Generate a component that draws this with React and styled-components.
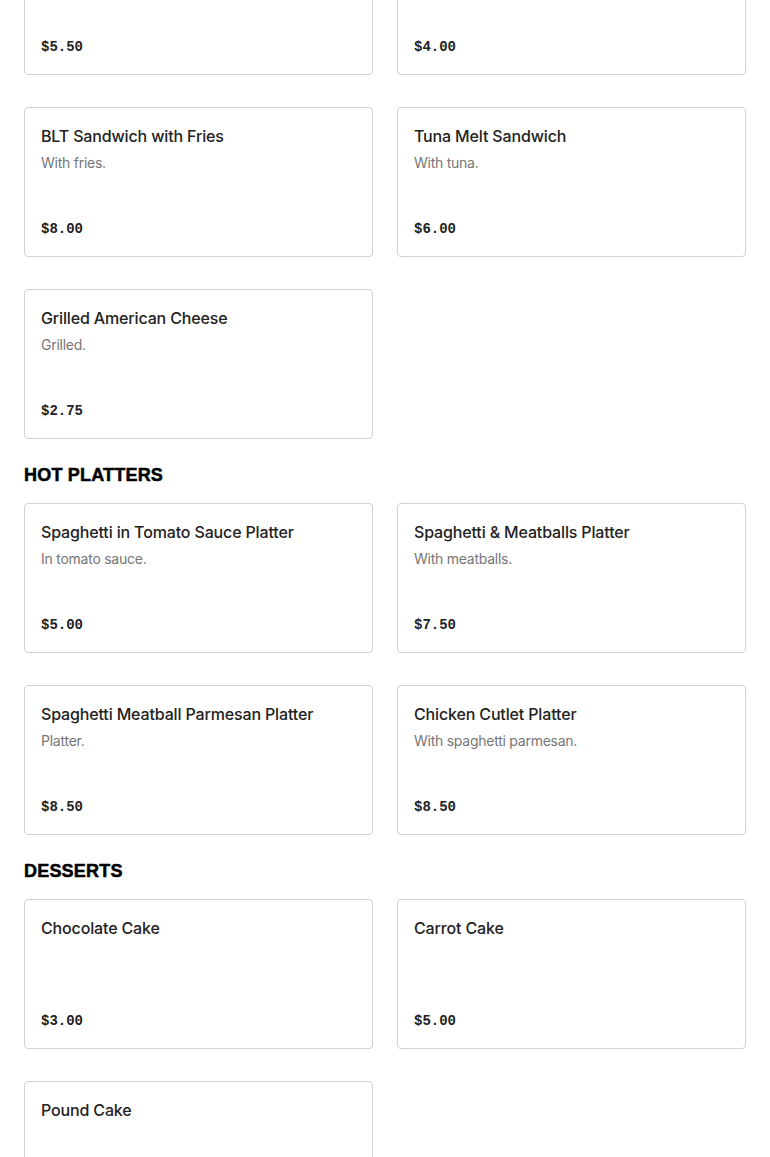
import React from "react";
import styled, { createGlobalStyle } from "styled-components";

const Global = createGlobalStyle`
  html, body { margin: 0; padding: 0; background: #fff; }
  body { font-family: Inter, "Liberation Sans", sans-serif; color: #222; }
`;

const Page = styled.main`
  padding: 0 24px;
  margin-top: -75px;
`;

const Section = styled.section`
  display: flex;
  flex-direction: column;
`;

const Heading = styled.h2`
  margin: 24px 0 16px;
  font-family: "Liberation Sans", Arial, sans-serif;
  font-weight: 900;
  font-size: 18px;
  line-height: 24px;
  letter-spacing: 0.2px;
  -webkit-text-stroke: 0.5px #000;
  color: #000;
  text-transform: uppercase;
`;

const Grid = styled.div`
  display: grid;
  grid-template-columns: 1fr 1fr;
  column-gap: 24px;
  row-gap: 32px;
`;

const Card = styled.article`
  box-sizing: border-box;
  height: 150px;
  border: 1px solid #d2d2d2;
  border-radius: 4px;
  padding: 16px 16px 15px;
  display: flex;
  flex-direction: column;
  background: #fff;
`;

const Title = styled.h3`
  margin: 0;
  font-family: Inter, "Liberation Sans", sans-serif;
  font-weight: 500;
  font-size: 16px;
  line-height: 24px;
  letter-spacing: -0.15px;
  color: #222;
`;

const Desc = styled.p`
  margin: 5px 0 0;
  font-family: Inter, "Liberation Sans", sans-serif;
  font-size: 14px;
  line-height: 20px;
  letter-spacing: -0.25px;
  color: #767676;
`;

const Price = styled.span`
  margin-top: auto;
  font-family: "Liberation Mono", "DejaVu Sans Mono", monospace;
  font-weight: 700;
  font-size: 14px;
  line-height: 24px;
  color: #222;
`;

const sections = [
  {
    name: null,
    items: [
      { t: "Ham & Cheese Sandwich", d: "On a roll.", p: "$5.50" },
      { t: "Egg Salad Sandwich", d: "With lettuce.", p: "$4.00" },
      { t: "BLT Sandwich with Fries", d: "With fries.", p: "$8.00" },
      { t: "Tuna Melt Sandwich", d: "With tuna.", p: "$6.00" },
      { t: "Grilled American Cheese", d: "Grilled.", p: "$2.75" },
    ],
  },
  {
    name: "Hot Platters",
    items: [
      { t: "Spaghetti in Tomato Sauce Platter", d: "In tomato sauce.", p: "$5.00" },
      { t: "Spaghetti & Meatballs Platter", d: "With meatballs.", p: "$7.50" },
      { t: "Spaghetti Meatball Parmesan Platter", d: "Platter.", p: "$8.50" },
      { t: "Chicken Cutlet Platter", d: "With spaghetti parmesan.", p: "$8.50" },
    ],
  },
  {
    name: "Desserts",
    items: [
      { t: "Chocolate Cake", p: "$3.00" },
      { t: "Carrot Cake", p: "$5.00" },
      { t: "Pound Cake", p: "$3.00" },
    ],
  },
];

export default function App() {
  return (
    <>
      <Global />
      <Page>
        {sections.map((s, i) => (
          <Section key={i}>
            {s.name && <Heading>{s.name}</Heading>}
            <Grid>
              {s.items.map((it) => (
                <Card key={it.t}>
                  <Title>{it.t}</Title>
                  {it.d && <Desc>{it.d}</Desc>}
                  <Price>{it.p}</Price>
                </Card>
              ))}
            </Grid>
          </Section>
        ))}
      </Page>
    </>
  );
}
